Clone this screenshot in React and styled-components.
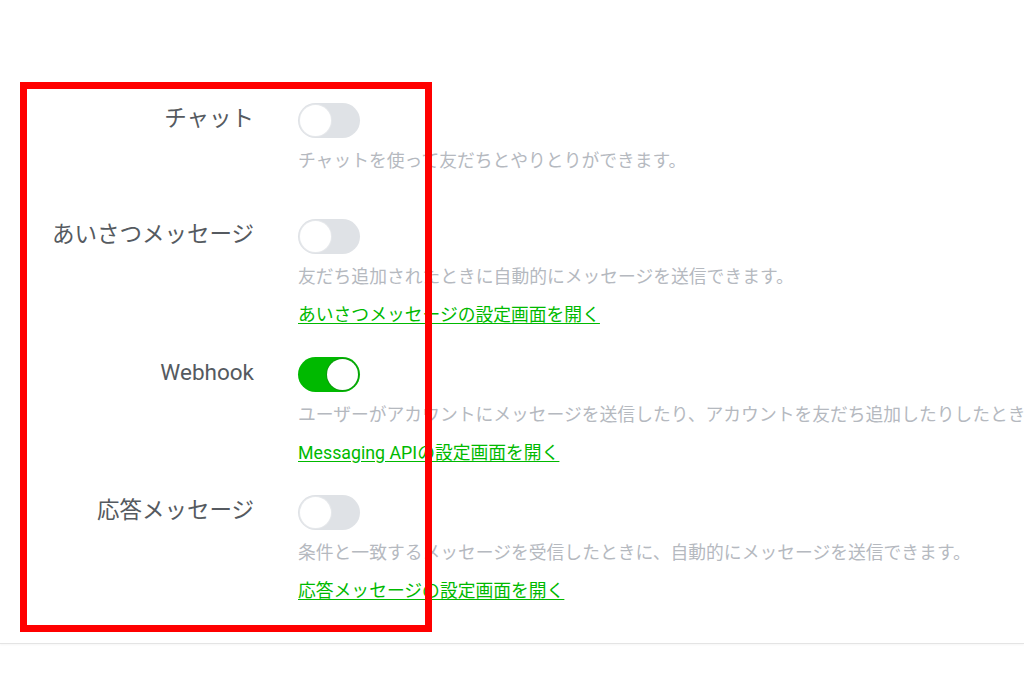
import React from 'react';
import styled, { createGlobalStyle } from 'styled-components';

const GlobalStyle = createGlobalStyle`
  html, body {
    margin: 0;
    padding: 0;
    background: #ffffff;
    overflow: hidden;
  }
  body {
    font-family: Roboto, "Noto Sans CJK JP", sans-serif;
    -webkit-font-smoothing: antialiased;
  }
`;

const StyledPage = styled.div`
  position: relative;
  width: 1024px;
  height: 675px;
  overflow: hidden;
`;

const StyledSettings = styled.section`
  display: flex;
  flex-direction: column;
  gap: 29px;
  padding: 103px 0 39px;
  border-bottom: 1px solid #e4e4e4;
  box-shadow: 0 1px 2px rgba(0, 0, 0, 0.04);
`;

const StyledRow = styled.div`
  display: grid;
  grid-template-columns: 254px 1fr;
  column-gap: 44px;
  align-items: start;
`;

const StyledLabel = styled.div`
  text-align: right;
  font-size: 22.5px;
  line-height: 30px;
  color: #555a60;
  white-space: nowrap;
`;

const StyledContent = styled.div`
  display: flex;
  flex-direction: column;
  align-items: flex-start;
  min-width: 0;
`;

const StyledSwitch = styled.button`
  position: relative;
  width: 62px;
  height: 35px;
  padding: 0;
  border: 0;
  border-radius: 18px;
  cursor: pointer;
  background-color: ${({ $on }) => ($on ? '#00b900' : '#dfe2e6')};

  &::after {
    content: '';
    position: absolute;
    top: 2px;
    left: ${({ $on }) => ($on ? '29px' : '2px')};
    width: 31px;
    height: 31px;
    border-radius: 50%;
    background: #ffffff;
    box-shadow: 0 0 0 1px ${({ $on }) => ($on ? '#0a9a0a' : '#e6e8eb')};
  }
`;

const StyledDesc = styled.p`
  margin: 10px 0 12px;
  font-size: 17.8px;
  line-height: 26px;
  color: #b5b9bf;
  white-space: nowrap;

  &:last-child {
    margin-bottom: 16px;
  }
`;

const StyledLink = styled.a`
  font-size: 17.8px;
  line-height: 26px;
  color: #00b900;
  text-decoration: underline;
  text-underline-offset: 2px;
  white-space: nowrap;
  cursor: pointer;
`;

const StyledHighlight = styled.div`
  position: absolute;
  top: 82px;
  left: 20px;
  width: 412px;
  height: 550px;
  box-sizing: border-box;
  border: 7px solid #ff0000;
  pointer-events: none;
`;

const settings = [
  {
    label: 'チャット',
    on: false,
    desc: 'チャットを使って友だちとやりとりができます。',
  },
  {
    label: 'あいさつメッセージ',
    on: false,
    desc: '友だち追加されたときに自動的にメッセージを送信できます。',
    link: 'あいさつメッセージの設定画面を開く',
  },
  {
    label: 'Webhook',
    on: true,
    desc: 'ユーザーがアカウントにメッセージを送信したり、アカウントを友だち追加したりしたときに、Webhook URLにイベントが送信されます。',
    link: 'Messaging APIの設定画面を開く',
  },
  {
    label: '応答メッセージ',
    on: false,
    desc: '条件と一致するメッセージを受信したときに、自動的にメッセージを送信できます。',
    link: '応答メッセージの設定画面を開く',
  },
];

const App = () => (
  <StyledPage>
    <GlobalStyle />
    <StyledSettings>
      {settings.map((item) => (
        <StyledRow key={item.label}>
          <StyledLabel>{item.label}</StyledLabel>
          <StyledContent>
            <StyledSwitch type="button" $on={item.on} aria-label={item.label} aria-pressed={item.on} />
            <StyledDesc>{item.desc}</StyledDesc>
            {item.link && <StyledLink>{item.link}</StyledLink>}
          </StyledContent>
        </StyledRow>
      ))}
    </StyledSettings>
    <StyledHighlight />
  </StyledPage>
);

export default App;
